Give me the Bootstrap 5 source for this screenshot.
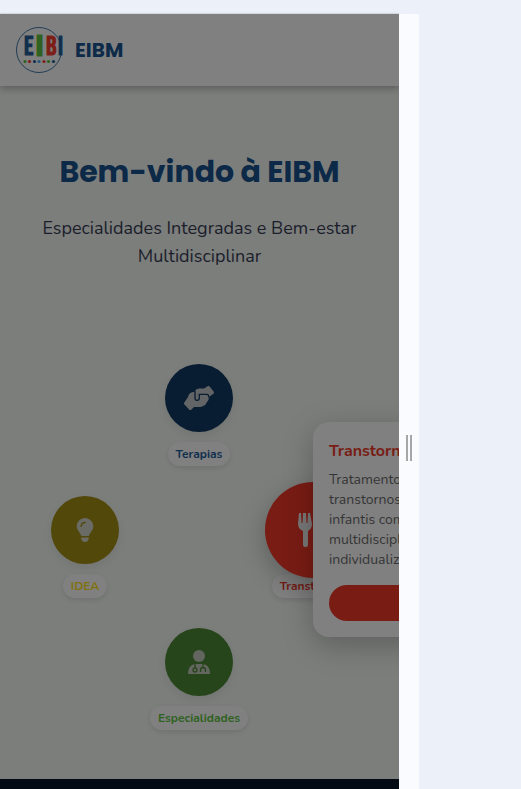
<!DOCTYPE html>
<html lang="pt-BR">
<head>
<meta charset="utf-8">
<meta name="viewport" content="width=device-width, initial-scale=1">
<title>EIBM</title>
<link href="https://cdn.jsdelivr.net/npm/bootstrap@5.3.0/dist/css/bootstrap.min.css" rel="stylesheet">
<style>
  body { background: #ebf0f9; font-family: Nunito, "Open Sans", sans-serif; }
  .stage { padding-top: 14px; padding-right: 102px; height: 100vh; }
  .site { background: #7c7e7c; min-width: 0; box-shadow: 0 0 2px rgba(0,0,0,.3); }
  .site-head { background: #808080; height: 72px; padding: 0 16px; gap: 12px; box-shadow: 0 2px 8px rgba(0,0,0,.3); }
  .brand-name { font: 700 20px/28px Poppins, Inter, sans-serif; color: #0d2b49; }
  .welcome { padding: 65px 16px 0; }
  .welcome h1 { font: 700 30px/42px Poppins, Inter, sans-serif; color: #0c2947; margin-bottom: 21px; }
  .welcome p { font-size: 18px; line-height: 28px; color: #1b1d2b; }
  .orbit { display: grid; grid-template-columns: repeat(3, 114px); grid-auto-rows: 102px; row-gap: 30px; justify-content: center; margin-top: 94px; padding-right: 1px; }
  .node { text-decoration: none; gap: 10px; position: relative; }
  .n-top { grid-area: 1 / 2; } .n-left { grid-area: 2 / 1; } .n-right { grid-area: 2 / 3; } .n-bottom { grid-area: 3 / 2; }
  .disc { width: 68px; height: 68px; flex: none; position: relative; z-index: 1; box-shadow: 0 4px 10px rgba(0,0,0,.07); }
  .disc.active { width: 96px; height: 96px; margin: -14px; box-shadow: 0 8px 24px rgba(0,0,0,.25); }
  .tag { font-weight: 700; font-size: 12px; line-height: 24px; padding: 0 8px; border-radius: 12px; background: #808080; box-shadow: 0 2px 5px rgba(0,0,0,.1); }
  .blue { background: #081d31; } .gold { background: #52480a; } .green { background: #27451a; } .red { background: #781c14; }
  .t-blue { color: #0f2f4e; } .t-gold { color: #80710f; } .t-green { color: #2f6220; } .t-red { color: #781c14; }
  .info { position: absolute; z-index: 3; left: 57px; top: -74px; width: 280px; padding: 16px; border-radius: 16px; background: #808080; box-shadow: 0 8px 30px rgba(0,0,0,.25); }
  .info h2 { font-size: 16px; line-height: 26px; font-weight: 700; margin-bottom: 6px; }
  .info p { font-size: 14px; line-height: 20px; color: #353535; margin-bottom: 15px; white-space: nowrap; }
  .info .btn { height: 36px; font-size: 14px; color: #808080; }
  .foot { height: 10px; background: #030a14; }
  .grip { width: 20px; background: #f9fbff; gap: 2px; padding-top: 92px; }
  .grip span { width: 2px; height: 26px; background: #a5a7a6; }
</style>
<script src="https://cdn.jsdelivr.net/npm/bootstrap@5.3.0/dist/js/bootstrap.bundle.min.js"></script>
</head>
<body>
<div class="stage d-flex overflow-hidden">
  <div class="site flex-grow-1 d-flex flex-column overflow-hidden">
    <header class="site-head d-flex align-items-center flex-shrink-0">
      <svg width="47" height="46" viewBox="0 0 47 46" overflow="visible" role="img" aria-label="Logo">
        <circle cx="23" cy="23" r="22.5" fill="none" stroke="#213c56"/>
        <g font-family="'Bebas Neue',Oswald,'Roboto Condensed','Liberation Sans Narrow',sans-serif" font-weight="700" font-size="26">
          <text x="8" y="28" fill="#122f4d">E</text>
          <text x="21" y="28" fill="#2f6220" stroke="#2f6220" stroke-width="2">I</text>
          <text x="30" y="28" fill="#7c1f19">B</text>
          <text x="42" y="28" fill="#122f4d">I</text>
        </g>
        <g>
          <circle cx="9" cy="34.500" r="1.600" fill="#2f6220"/><circle cx="13.500" cy="34.500" r="1.600" fill="#7c1f19"/>
          <circle cx="18.500" cy="34.500" r="1.600" fill="#122f4d"/><circle cx="23" cy="34.500" r="1.600" fill="#27567c"/>
          <circle cx="28" cy="34.500" r="1.600" fill="#7c1f19"/><circle cx="32.500" cy="34.500" r="1.600" fill="#2f6220"/>
          <circle cx="37.500" cy="34.500" r="1.600" fill="#122f4d"/>
        </g>
      </svg>
      <span class="brand-name">EIBM</span>
    </header>
    <main class="flex-grow-1">
      <section class="welcome text-center">
        <h1>Bem-vindo à EIBM</h1>
        <p class="mb-0">Especialidades Integradas e Bem-estar Multidisciplinar</p>
      </section>
      <section class="orbit">
        <a href="#terapias" class="node n-top d-flex flex-column align-items-center">
          <span class="disc blue rounded-circle d-flex align-items-center justify-content-center">
            <svg width="30" height="24" viewBox="0 0 30 24"><path fill="#626466" d="M0 17 4 11Q5 6 10 6L11 5Q12 2.500 15 2.500H20L24 0Q25 -.3 26 1L30 6Q30.500 7 29 8L25 11Q25 14 23 16 22 19 19 20 18 21 16 21H10L7 24Q6 24.500 5 23.500L0 18Z"/><path fill="none" stroke="#081d31" stroke-width="1.300" d="M11 5V12Q11 14.300 13 14.300 15.300 14.300 15.300 12V8.300H23Q24.800 8.300 24.800 11.500"/></svg>
          </span>
          <span class="tag t-blue">Terapias</span>
        </a>
        <a href="#idea" class="node n-left d-flex flex-column align-items-center">
          <span class="disc gold rounded-circle d-flex align-items-center justify-content-center">
            <svg width="18" height="24" viewBox="0 0 384 512"><path fill="#6b6b66" d="M272 384c10-34 31-63 52-92 5-8 11-15 16-23 18-27 29-59 29-93C369 79 289 0 192 0S16 79 16 176c0 34 11 66 29 93 5 8 11 15 16 23 21 29 42 58 52 92zM192 512c44 0 80-36 80-80v-16H112v16c0 44 36 80 80 80z"/><path d="M110 176c0-45 37-82 82-82" fill="none" stroke="#52480a" stroke-width="32" stroke-linecap="round"/></svg>
          </span>
          <span class="tag t-gold">IDEA</span>
        </a>
        <div class="node n-right d-flex flex-column align-items-center">
          <span class="disc active red rounded-circle d-flex align-items-center justify-content-center">
            <svg width="30" height="34" viewBox="0 0 30 34"><path fill="#777" d="M1 0H3L3.500 10H4.500L5 0H8L8.500 10H9.500L10 0H12L14 11Q14 16 10 18V32Q10 34 8 34 5 34 5 32V18Q0 16 0 11ZM28 0Q20 3 20 12V21H25V32Q25 34 28 34Z"/></svg>
          </span>
          <span class="tag t-red">Transtornos</span>
          <article class="info">
            <h2 class="t-red">Transtornos Alimentares</h2>
            <p>Tratamento de<br>transtornos alimentares<br>infantis com equipe<br>multidisciplinar<br>individualizada</p>
            <button type="button" class="btn red w-100 rounded-pill border-0 py-0">Saiba mais</button>
          </article>
        </div>
        <a href="#especialidades" class="node n-bottom d-flex flex-column align-items-center">
          <span class="disc green rounded-circle d-flex align-items-center justify-content-center">
            <svg width="22" height="24" viewBox="0 0 22 24"><circle cx="11" cy="6" r="6" fill="#62665f"/><path fill="#62665f" d="M7 14H15Q22 15 22 24H0Q0 15 7 14Z"/><path d="M7 14V18M15 14V17M12.500 22V20Q12.500 17.500 15 17.500T17.500 20V22" fill="none" stroke="#27451a" stroke-width="1.300"/><circle cx="7" cy="20" r="2" fill="none" stroke="#27451a" stroke-width="1.300"/></svg>
          </span>
          <span class="tag t-green">Especialidades</span>
        </a>
      </section>
    </main>
    <footer class="foot flex-shrink-0"></footer>
  </div>
  <div class="grip d-flex align-items-center justify-content-center flex-shrink-0"><span></span><span></span></div>
</div>
</body>
</html>
